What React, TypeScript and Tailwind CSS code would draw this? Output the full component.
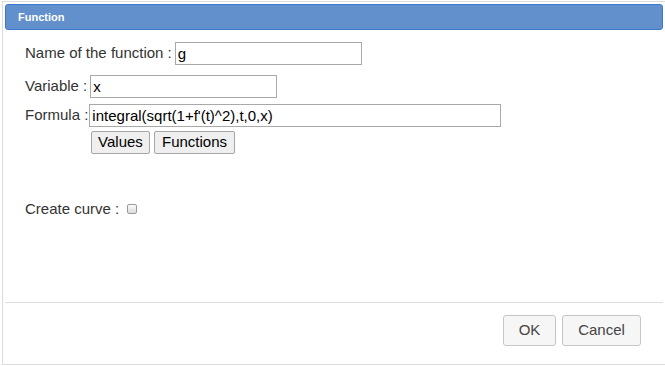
import React from "react";

export default function App() {
  return (
    <div className="w-[665px] h-[366px] bg-white overflow-hidden font-['Liberation_Sans',Arial,sans-serif]">
      <div className="ml-[2px] mt-[1px] h-[364px] w-[680px] border-l border-t border-b border-[#dcdcdc] pl-[2px] pt-[2px] flex flex-col">
        <div className="w-[658px] h-[26px] rounded-[3px] border border-[#3c78cf] bg-[#6190cd] flex items-center pl-[12px] text-white font-bold text-[11px]">
          Function
        </div>
        <div className="flex-1 pl-[20px] text-[15px] text-[#333]">
          <div className="mt-[12px] flex items-center h-[23px]">
            <span>Name of the function :</span>
            <div className="ml-[3px] w-[187px] h-[23px] border border-[#a9a9a9] pl-[2px] text-black leading-[21px]">g</div>
          </div>
          <div className="mt-[10px] flex items-center h-[23px]">
            <span>Variable :</span>
            <div className="ml-[3px] w-[187px] h-[23px] border border-[#a9a9a9] pl-[2px] text-black leading-[21px]">x</div>
          </div>
          <div className="mt-[6px] flex items-center h-[23px]">
            <span>Formula :</span>
            <div className="ml-[1px] w-[412px] h-[23px] border border-[#a9a9a9] pl-[2px] text-black leading-[21px]">integral(sqrt(1+f'(t)^2),t,0,x)</div>
          </div>
          <div className="mt-[4px] flex items-center gap-[4px] pl-[66px]">
            <div className="h-[23px] w-[59px] flex items-center justify-center border border-[#a6a6a6] rounded-[2px] bg-[#efefef] text-black">Values</div>
            <div className="h-[23px] w-[81px] flex items-center justify-center border border-[#a6a6a6] rounded-[2px] bg-[#efefef] text-black">Functions</div>
          </div>
          <div className="mt-[45px] flex items-center h-[20px]">
            <span>Create curve :</span>
            <div className="ml-[8px] w-[10px] h-[10px] rounded-[2px] border border-[#9a9a9a] bg-gradient-to-b from-[#fafafa] to-[#dcdcdc]"></div>
          </div>
        </div>
        <div className="w-[658px] border-t border-[#dddddd]"></div>
        <div className="w-[658px] h-[61px] flex items-start pt-[12px] pl-[498px] gap-[6px] text-[15px] text-[#454545]">
          <div className="h-[31px] w-[53px] flex items-center justify-center border border-[#c5c5c5] rounded-[3px] bg-[#f6f6f6]">OK</div>
          <div className="h-[31px] w-[79px] flex items-center justify-center border border-[#c5c5c5] rounded-[3px] bg-[#f6f6f6]">Cancel</div>
        </div>
      </div>
    </div>
  );
}
